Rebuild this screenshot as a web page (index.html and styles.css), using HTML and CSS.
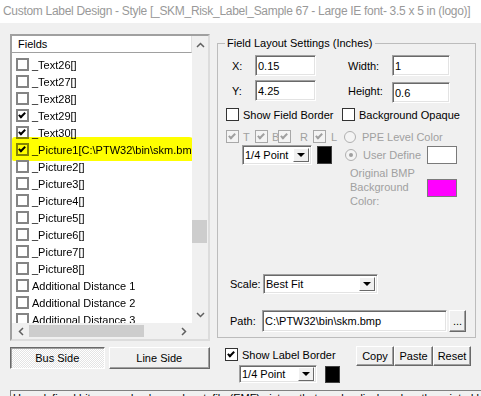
FILE: index.html
```html
<!DOCTYPE html>
<html lang="en">
<head>
    <meta charset="UTF-8">
    <title>Custom Label Design</title>
    <link rel="stylesheet" href="styles.css">
</head>
<body>
    <div class="titlebar">Custom Label Design - Style [_SKM_Risk_Label_Sample 67 - Large IE font- 3.5 x 5 in (logo)]</div>

    <div class="main">
        <div class="left">
            <div class="listbox">
                <div class="list-main">
                    <div class="list-head">Fields</div>
                    <div class="rows">
                        <div class="row"><span class="cb"></span>_Text26[]</div>
                        <div class="row"><span class="cb"></span>_Text27[]</div>
                        <div class="row"><span class="cb"></span>_Text28[]</div>
                        <div class="row"><span class="cb on"></span>_Text29[]</div>
                        <div class="row"><span class="cb on"></span>_Text30[]</div>
                        <div class="row marked"><span class="cb on"></span>_Picture1[C:\PTW32\bin\skm.bmp]</div>
                        <div class="row"><span class="cb"></span>_Picture2[]</div>
                        <div class="row"><span class="cb"></span>_Picture3[]</div>
                        <div class="row"><span class="cb"></span>_Picture4[]</div>
                        <div class="row"><span class="cb"></span>_Picture5[]</div>
                        <div class="row"><span class="cb"></span>_Picture6[]</div>
                        <div class="row"><span class="cb"></span>_Picture7[]</div>
                        <div class="row"><span class="cb"></span>_Picture8[]</div>
                        <div class="row"><span class="cb"></span>Additional Distance 1</div>
                        <div class="row"><span class="cb"></span>Additional Distance 2</div>
                        <div class="row"><span class="cb"></span>Additional Distance 3</div>
                    </div>
                </div>
                <div class="vscroll">
                    <span class="arrow"><svg width="9" height="6" viewBox="0 0 9 6"><path d="M1 5 L4.5 1.5 L8 5" fill="none" stroke="#606060" stroke-width="1.5"/></svg></span>
                    <div class="vtrack"><div class="vthumb"></div></div>
                    <span class="arrow"><svg width="9" height="6" viewBox="0 0 9 6"><path d="M1 1 L4.5 4.5 L8 1" fill="none" stroke="#606060" stroke-width="1.5"/></svg></span>
                </div>
                <div class="hscroll">
                    <span class="arrow"><svg width="6" height="9" viewBox="0 0 6 9"><path d="M5 1 L1.5 4.5 L5 8" fill="none" stroke="#606060" stroke-width="1.5"/></svg></span>
                    <div class="htrack"><div class="hthumb"></div></div>
                    <span class="arrow"><svg width="6" height="9" viewBox="0 0 6 9"><path d="M1 1 L4.5 4.5 L1 8" fill="none" stroke="#606060" stroke-width="1.5"/></svg></span>
                </div>
                <div class="corner"></div>
            </div>
            <div class="side-buttons">
                <button class="btn pressed bus">Bus Side</button>
                <button class="btn line">Line Side</button>
            </div>
        </div>

        <div class="right">
            <fieldset class="group">
                <legend>Field Layout Settings (Inches)</legend>
                <div class="group-body">
                    <div class="f-row r-pos">
                        <span class="lbl-xy">X:</span>
                        <input class="tb w-x" type="text" value="0.15">
                        <span class="lbl-wh">Width:</span>
                        <input class="tb w-w" type="text" value="1">
                    </div>
                    <div class="f-row r-pos2">
                        <span class="lbl-xy">Y:</span>
                        <input class="tb w-x" type="text" value="4.25">
                        <span class="lbl-wh">Height:</span>
                        <input class="tb w-w drop2" type="text" value="0.6">
                    </div>
                    <div class="f-row r-checks">
                        <label class="opt opt-border"><span class="cb thin"></span>Show Field Border</label>
                        <label class="opt"><span class="cb thin"></span>Background Opaque</label>
                    </div>
                    <div class="f-row r-sides">
                        <span class="side s-t"><span class="cb dis on"></span><i>T</i></span>
                        <span class="side s-b"><span class="cb dis on"></span><i>B</i></span>
                        <span class="side s-r"><span class="cb dis on"></span><i>R</i></span>
                        <span class="side s-l"><span class="cb dis on"></span><i>L</i></span>
                        <span class="radio-opt"><span class="rb"></span>PPE Level Color</span>
                    </div>
                    <div class="f-row r-line">
                        <div class="combo w-pt"><span class="combo-text">1/4 Point</span><span class="drop"><span class="tri"></span></span></div>
                        <span class="swatch black"></span>
                        <span class="radio-opt user"><span class="rb on"></span>User Define</span>
                        <span class="swatch white"></span>
                    </div>
                    <div class="f-row r-bmp">
                        <span class="bmp-text">Original BMP<br>Background<br>Color:</span>
                        <span class="swatch magenta"></span>
                    </div>
                    <div class="f-row r-scale">
                        <span class="lbl-sp">Scale:</span>
                        <div class="combo w-scale"><span class="combo-text">Best Fit</span><span class="drop"><span class="tri"></span></span></div>
                    </div>
                    <div class="f-row r-path">
                        <span class="lbl-sp">Path:</span>
                        <input class="tb w-path" type="text" value="C:\PTW32\bin\skm.bmp">
                        <button class="btn browse">...</button>
                    </div>
                </div>
            </fieldset>

            <div class="label-opts">
                <div class="lo-left">
                    <label class="opt"><span class="cb thin on"></span>Show Label Border</label>
                    <div class="lo-line">
                        <div class="combo w-pt2"><span class="combo-text">1/4 Point</span><span class="drop"><span class="tri"></span></span></div>
                        <span class="swatch black small"></span>
                    </div>
                </div>
                <div class="lo-right">
                    <button class="btn b-copy">Copy</button>
                    <button class="btn b-paste">Paste</button>
                    <button class="btn b-reset">Reset</button>
                </div>
            </div>
        </div>
    </div>

    <div class="help">User-defined bitmap and enhanced metafile (EMF) picture that can be displayed on the printed label.</div>
</body>
</html>
```

FILE: styles.css
```css
body {
    margin: 0;
    width: 481px;
    height: 396px;
    overflow: hidden;
    background: #f0f0f0;
    font-family: "Liberation Sans", Arial, sans-serif;
    font-size: 11px;
    color: #000;
}
input, button {
    font: inherit;
    color: inherit;
    margin: 0;
}
.titlebar {
    height: 23px;
    background: #fff;
    color: #999;
    font-size: 12px;
    letter-spacing: -0.3px;
    line-height: 22px;
    padding-left: 3px;
    white-space: nowrap;
    overflow: hidden;
}
.main {
    display: flex;
    height: 367px;
    padding-left: 10px;
}
.left {
    width: 200px;
    padding-top: 11px;
}
.right {
    width: 259px;
    margin-left: 7px;
    padding-top: 14px;
}

/* fields list */
.listbox {
    display: grid;
    grid-template-columns: 180px 16px;
    grid-template-rows: 287px 16px;
    width: 200px;
    height: 307px;
    box-sizing: border-box;
    border: 2px solid;
    border-color: #a0a0a0 #dcdcdc #dcdcdc #a0a0a0;
    background: #fff;
}
.list-main {
    overflow: hidden;
}
.list-head {
    height: 16px;
    line-height: 16px;
    padding-left: 6px;
    border-bottom: 1px solid #a0a0a0;
    border-right: 1px solid #e0e0e0;
}
.rows {
    position: relative;
    z-index: 0;
    padding-top: 3px;
}
.row {
    position: relative;
    display: flex;
    align-items: center;
    height: 17px;
    padding-left: 4px;
    white-space: nowrap;
}
.row .cb {
    margin-right: 3px;
}
.row.marked::after {
    content: "";
    position: absolute;
    left: 0;
    right: -4px;
    top: -4px;
    bottom: -3px;
    background: #ffff00;
    mix-blend-mode: multiply;
    border-radius: 3px 7px 5px 2px;
}
.vscroll {
    display: flex;
    flex-direction: column;
    background: #f0f0f0;
}
.arrow {
    display: flex;
    align-items: center;
    justify-content: center;
    width: 16px;
    height: 17px;
}
.vtrack {
    flex: 1;
}
.vthumb {
    margin-top: 167px;
    width: 15px;
    height: 23px;
    background: #cdcdcd;
}
.hscroll {
    display: flex;
    background: #f0f0f0;
}
.hscroll .arrow {
    width: 17px;
    height: 16px;
}
.htrack {
    flex: 1;
}
.hthumb {
    margin-top: 2px;
    width: 115px;
    height: 12px;
    background: #cdcdcd;
}
.corner {
    background: #f0f0f0;
}

/* buttons */
.btn {
    box-sizing: border-box;
    background: #f0f0f0;
    border: 1px solid;
    border-color: #fff #696969 #696969 #fff;
    box-shadow: inset -1px -1px 0 #a0a0a0;
    padding: 0;
    text-align: center;
}
.btn.pressed {
    border-color: #696969 #fff #fff #696969;
    box-shadow: inset 1px 1px 0 #a0a0a0;
    background: repeating-conic-gradient(#fff 0 25%, #e4e4e4 0 50%) 0 0 / 2px 2px;
}
.side-buttons {
    display: flex;
    margin-top: 6px;
}
.bus {
    width: 95px;
    height: 22px;
}
.line {
    width: 102px;
    height: 22px;
    margin-left: 4px;
}

/* checkboxes and radios */
.cb {
    position: relative;
    flex: none;
    width: 13px;
    height: 13px;
    box-sizing: border-box;
    border: 2px solid #848484;
    background: #fff;
}
.cb.on::after {
    content: "";
    position: absolute;
    left: 2px;
    top: 0;
    width: 2px;
    height: 5px;
    border: solid #000;
    border-width: 0 2px 2px 0;
    transform: rotate(45deg);
}
.cb.thin {
    border: 1px solid #333;
}
.cb.thin.on::after {
    left: 3px;
    top: 1px;
}
.cb.dis {
    border: 1px solid #a8a8a8;
    background: #f4f4f4;
}
.cb.dis.on::after {
    left: 3px;
    top: 1px;
    border-color: #a0a0a0;
}
.rb {
    position: relative;
    flex: none;
    width: 12px;
    height: 12px;
    box-sizing: border-box;
    border: 1px solid #b0b0b0;
    border-radius: 50%;
    background: #f4f4f4;
}
.rb.on::after {
    content: "";
    position: absolute;
    left: 3px;
    top: 3px;
    width: 4px;
    height: 4px;
    border-radius: 50%;
    background: #a0a0a0;
}

/* group box */
.group {
    margin: 0;
    padding: 0;
    min-width: 0;
    border: 1px solid #bcbcbc;
}
.group legend {
    margin-left: 7px;
    padding: 0 2px;
    line-height: 13px;
    font-weight: normal;
}
.group-body {
    display: flex;
    flex-direction: column;
    height: 287px;
}
.f-row {
    display: flex;
    align-items: center;
    flex: none;
}
.f-row > * {
    flex: none;
}
.tb {
    box-sizing: border-box;
    height: 21px;
    padding: 0 2px;
    background: #fff;
    border: 1px solid;
    border-color: #a0a0a0 #fff #fff #a0a0a0;
    box-shadow: inset 1px 1px 0 #696969, inset -1px -1px 0 #e3e3e3;
    outline: none;
}
.r-pos {
    margin-top: 5px;
    height: 21px;
    padding-left: 14px;
}
.r-pos2 {
    margin-top: 4px;
    height: 21px;
    padding-left: 14px;
}
.lbl-xy {
    width: 23px;
}
.lbl-wh {
    width: 44px;
    margin-left: 32px;
}
.w-x {
    width: 61px;
}
.w-w {
    width: 58px;
}
.drop2 {
    position: relative;
    top: 2px;
}
.r-checks {
    margin-top: 7px;
    height: 13px;
    padding-left: 8px;
}
.opt {
    display: flex;
    align-items: center;
}
.opt .cb {
    margin-right: 4px;
}
.opt-border {
    width: 116px;
}
.r-sides {
    margin-top: 9px;
    height: 13px;
    padding-left: 8px;
    color: #a0a0a0;
}
.side {
    display: flex;
    align-items: center;
}
.side i {
    font-style: normal;
}
.s-t { width: 29px; }
.s-t i { margin-left: 4px; }
.s-b { width: 23px; }
.s-b i { margin-left: 4px; }
.s-r { width: 35px; }
.s-r i { margin-left: 9px; }
.s-l { width: 31px; }
.s-l i { margin-left: 5px; }
.radio-opt {
    display: flex;
    align-items: center;
    color: #a0a0a0;
}
.radio-opt .rb {
    margin-right: 6px;
}
.r-line {
    margin-top: 2px;
    height: 20px;
    padding-left: 24px;
}
.combo {
    display: flex;
    box-sizing: border-box;
    height: 20px;
    padding: 2px;
    background: #fff;
    border: 1px solid;
    border-color: #a0a0a0 #fff #fff #a0a0a0;
    box-shadow: inset 1px 1px 0 #696969, inset -1px -1px 0 #e3e3e3;
}
.combo-text {
    flex: 1;
    padding-left: 0;
    line-height: 15px;
    white-space: nowrap;
    overflow: hidden;
}
.drop {
    display: flex;
    align-items: center;
    justify-content: center;
    width: 16px;
    box-sizing: border-box;
    background: #f0f0f0;
    border: 1px solid;
    border-color: #fff #696969 #696969 #fff;
}
.tri {
    border-left: 4px solid transparent;
    border-right: 4px solid transparent;
    border-top: 4px solid #000;
}
.w-pt {
    width: 70px;
}
.swatch {
    flex: none;
    box-sizing: border-box;
    width: 30px;
    height: 18px;
    border: 1px solid #7a7a7a;
}
.swatch.black {
    width: 15px;
    background: #000;
    border-color: #404040;
    margin-left: 5px;
}
.swatch.white {
    background: #fff;
}
.swatch.magenta {
    background: #ff00ff;
    align-self: flex-start;
    margin-top: 13px;
}
.user {
    width: 82px;
    margin-left: 13px;
}
.r-bmp {
    margin-top: 1px;
    padding-left: 132px;
    align-items: flex-start;
}
.bmp-text {
    width: 77px;
    line-height: 14px;
    color: #a0a0a0;
}
.r-scale {
    margin-top: 66px;
    height: 20px;
    padding-left: 12px;
}
.lbl-sp {
    width: 33px;
}
.w-scale {
    width: 115px;
}
.r-path {
    margin-top: 16px;
    height: 22px;
    padding-left: 12px;
}
.r-path .lbl-sp {
    width: 32px;
}
.w-path {
    width: 185px;
    height: 22px;
}
.browse {
    width: 17px;
    height: 22px;
    margin-left: 2px;
    line-height: 14px;
}

/* label border options */
.label-opts {
    display: flex;
}
.lo-left {
    width: 131px;
    padding-left: 8px;
    padding-top: 10px;
}
.lo-line {
    display: flex;
    align-items: center;
    margin-top: 4px;
    padding-left: 14px;
}
.w-pt2 {
    width: 78px;
    height: 18px;
    padding: 1px 2px;
}
.w-pt2 .combo-text {
    line-height: 14px;
}
.swatch.small {
    width: 15px;
    height: 17px;
    margin-left: 8px;
}
.lo-right {
    display: flex;
    padding-top: 8px;
}
.lo-right .btn {
    height: 20px;
}
.b-copy { width: 38px; }
.b-paste { width: 39px; }
.b-reset { width: 38px; }

.help {
    margin-left: 10px;
    height: 5px;
    padding-left: 2px;
    border-top: 1px solid #808080;
    border-left: 1px solid #808080;
    line-height: 15px;
    white-space: nowrap;
    overflow: hidden;
}
```
